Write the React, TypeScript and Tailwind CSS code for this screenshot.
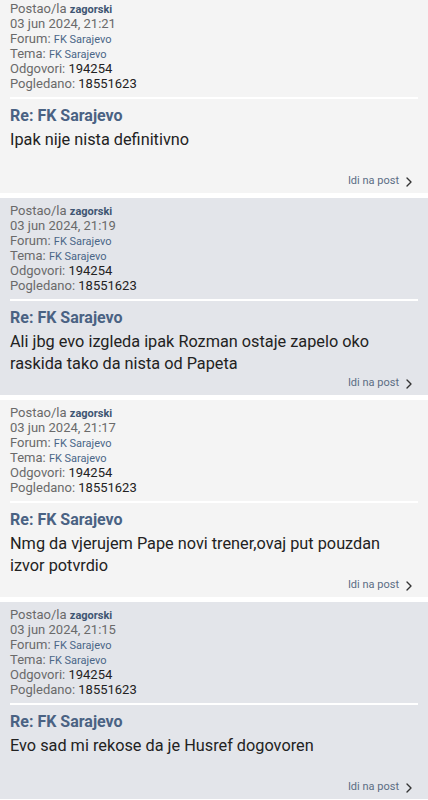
import { ChevronRight } from "lucide-react";

type Post = {
  time: string;
  body: string;
};

const posts: Post[] = [
  { time: "03 jun 2024, 21:21", body: "Ipak nije nista definitivno" },
  {
    time: "03 jun 2024, 21:19",
    body: "Ali jbg evo izgleda ipak Rozman ostaje zapelo oko raskida tako da nista od Papeta",
  },
  {
    time: "03 jun 2024, 21:17",
    body: "Nmg da vjerujem Pape novi trener,ovaj put pouzdan izvor potvrdio",
  },
  { time: "03 jun 2024, 21:15", body: "Evo sad mi rekose da je Husref dogovoren" },
];

const MetaLine = ({ children }: { children: React.ReactNode }) => (
  <p className="h-[15px] leading-[15px] whitespace-nowrap">{children}</p>
);

const PostCard = ({ post, alt }: { post: Post; alt: boolean }) => {
  return (
    <div
      className={
        alt
          ? "h-[197px] overflow-hidden bg-[#e3e5ea] px-[10px] pt-[5px]"
          : "h-[197px] overflow-hidden bg-[#f4f4f4] px-[10px] pt-[5px]"
      }
    >
      <div className="text-[13px] text-[#6a6a6a]">
        <MetaLine>
          Postao/la <span className="text-[11px] leading-[15px] font-bold text-[#3f5673]">zagorski</span>
        </MetaLine>
        <MetaLine>{post.time}</MetaLine>
        <MetaLine>
          Forum: <span className="text-[11px] leading-[15px] text-[#4a6687]">FK Sarajevo</span>
        </MetaLine>
        <MetaLine>
          Tema: <span className="text-[11px] leading-[15px] text-[#4a6687]">FK Sarajevo</span>
        </MetaLine>
        <MetaLine>
          Odgovori: <span className="text-[#222]">194254</span>
        </MetaLine>
        <MetaLine>
          Pogledano: <span className="text-[#222]">18551623</span>
        </MetaLine>
      </div>
      <div className="h-[2px] bg-white mt-[6px]" />
      <p className="mt-[7px] h-[20px] text-[16px] leading-[20px] font-bold text-[#4a6283]">Re: FK Sarajevo</p>
      <p className="mt-[3px] h-[44px] text-[16.3px] leading-[22px] text-[#222]">{post.body}</p>
      <div className="flex flex-row items-center justify-end pr-[1px] h-[14px] mt-[1px]">
        <span className="text-[11px] leading-[14px] text-[#5b6d84]">Idi na post</span>
        <ChevronRight size={16} strokeWidth={2} className="ml-[2px] mt-[2px] text-[#333]" />
      </div>
    </div>
  );
};

export default function App() {
  return (
    <div className="w-[428px] h-[800px] overflow-hidden bg-white font-['Roboto',sans-serif]">
      <div className="-mt-[4px] flex flex-col gap-[5px]">
        {posts.map((post, i) => (
          <PostCard key={post.time} post={post} alt={i % 2 === 1} />
        ))}
      </div>
    </div>
  );
}
